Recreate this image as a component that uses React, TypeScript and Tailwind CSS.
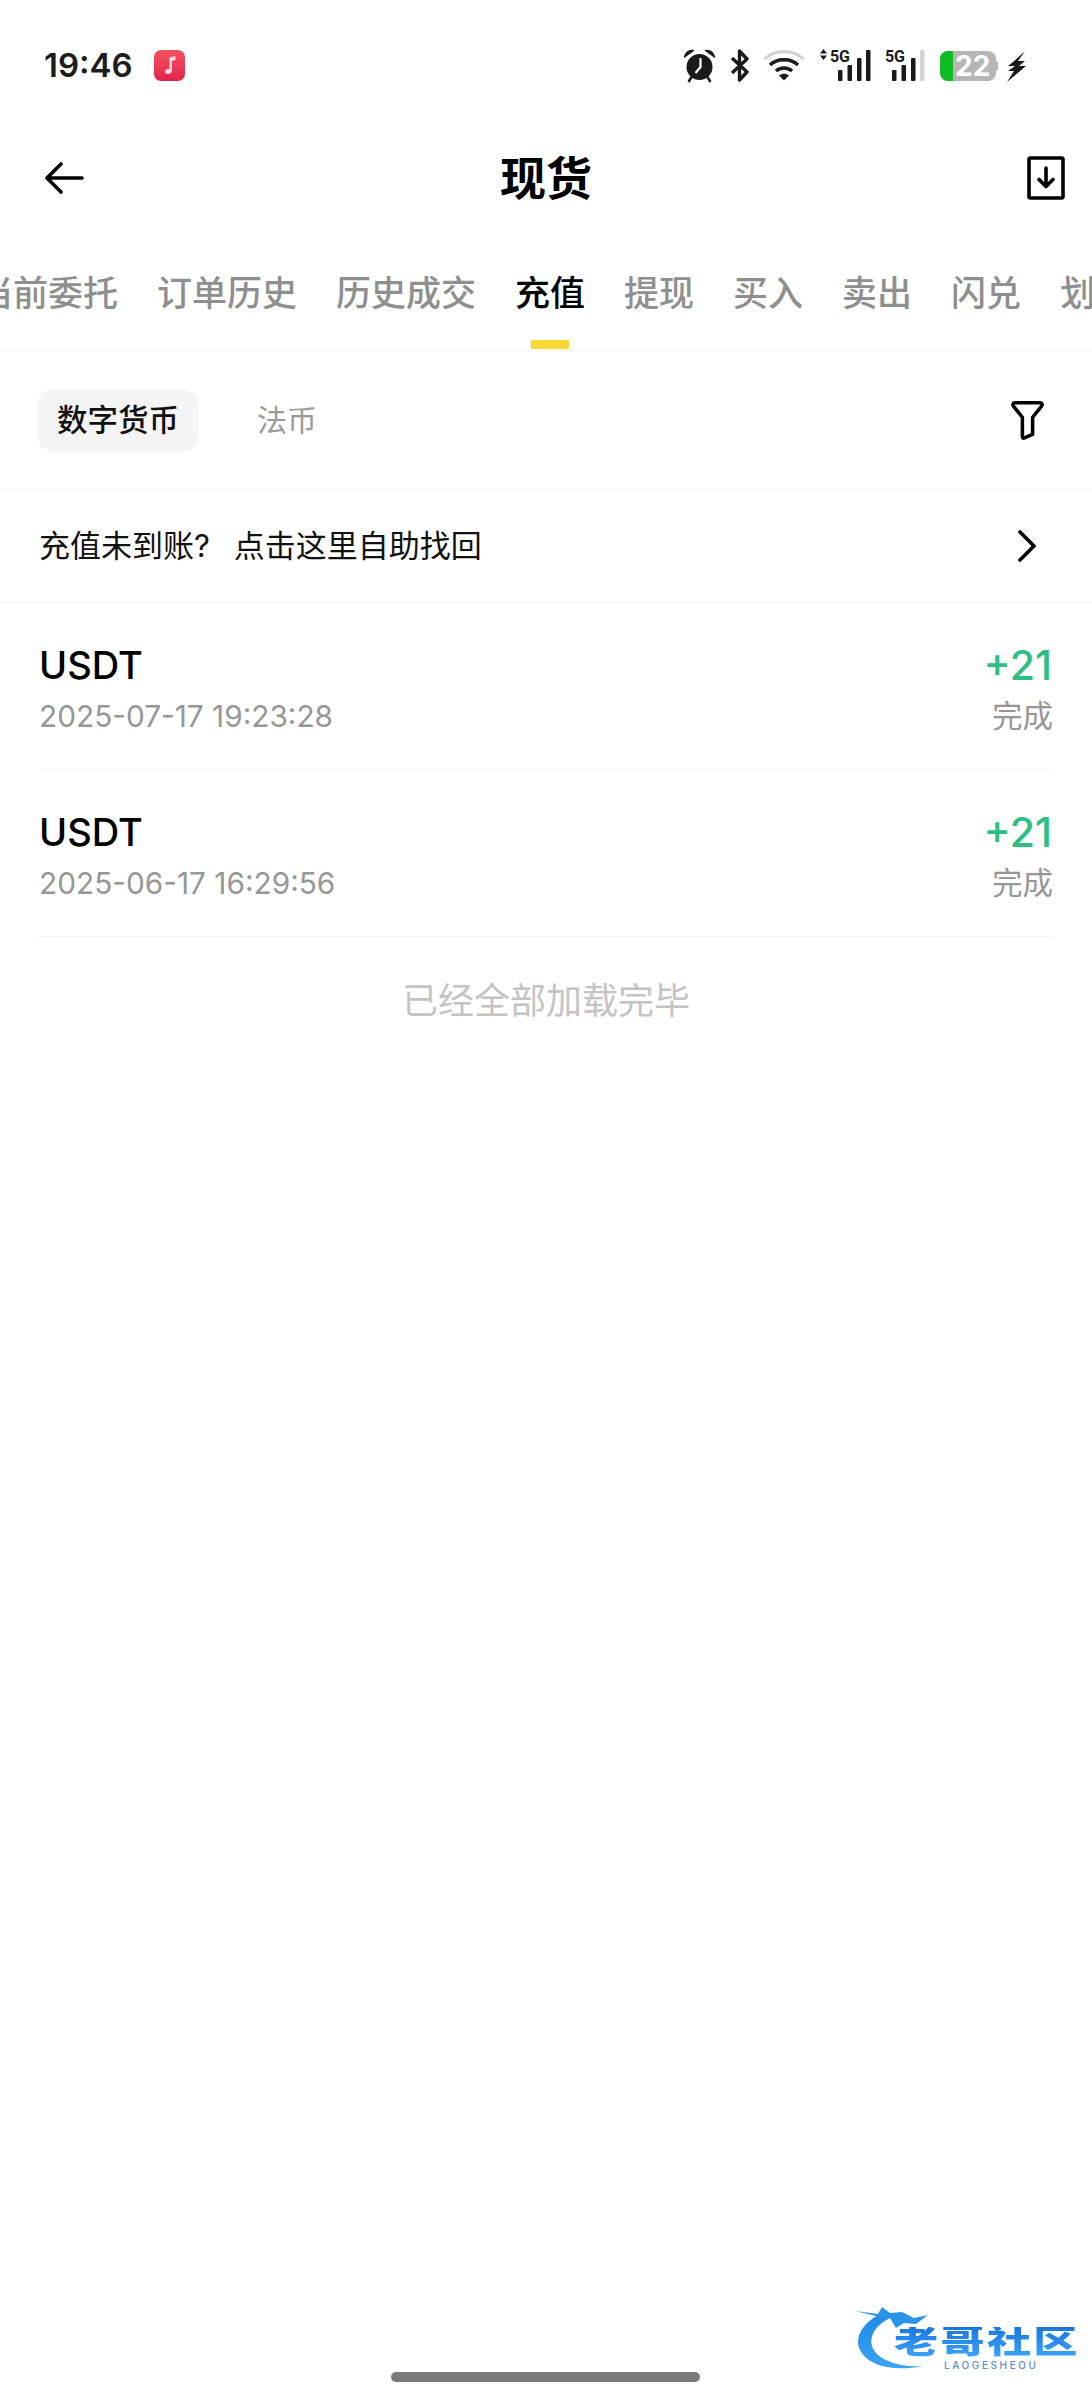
import React from 'react';

const tabs = ['当前委托', '订单历史', '历史成交', '充值', '提现', '买入', '卖出', '闪兑', '划转'];

const records = [
    { coin: 'USDT', time: '2025-07-17 19:23:28', amount: '+21', status: '完成' },
    { coin: 'USDT', time: '2025-06-17 16:29:56', amount: '+21', status: '完成' },
];

const Signal = ({ arrows, lastOff }: { arrows?: boolean; lastOff?: boolean }) => (
    <svg width={arrows ? 53 : 40} height="34" viewBox={arrows ? '0 0 53 34' : '0 0 40 34'} className="shrink-0">
        {arrows && <path d="M4.5 1 L8 5.5 H1 Z M4.5 12 L8 7.5 H1 Z" fill="#1a1a1a" />}
        <text x={arrows ? 11 : 0} y="14" fontSize="16" fontWeight="700" fill="#1a1a1a" fontFamily="Roboto, sans-serif" textLength="20">5G</text>
        <g transform={arrows ? 'translate(19 0)' : 'translate(7 0)'} fill="#1a1a1a">
            <rect x="0" y="22" width="4.5" height="11" rx="1" />
            <rect x="9.5" y="17" width="4.5" height="16" rx="1" />
            <rect x="19" y="10" width="4.5" height="23" rx="1" />
            <rect x="28" y="2" width="4.5" height="31" rx="1" fill={lastOff ? '#d4d4d4' : '#1a1a1a'} />
        </g>
    </svg>
);

const StatusBar = () => (
    <div className="h-[100px] pt-[49px] pl-[44px] pr-[65px] flex items-start justify-between">
        <div className="flex items-center h-[32px]">
            <span className="w-[110px] text-[33px] font-semibold text-[#1c1c1c] leading-none" style={{ fontFamily: 'Inter, sans-serif' }}>19:46</span>
            <div className="w-[31px] h-[31px] rounded-[7px] bg-gradient-to-b from-[#f4505f] to-[#e0224e] flex items-center justify-center">
                <svg width="20" height="22" viewBox="0 0 20 22">
                    <path d="M9.5 15V3.5L15.5 2V6L12 7V16.5C12 18.8 10 20 8 20C6 20 5 18.8 5 17.4C5 15.8 6.6 14.5 9.5 15Z" fill="#fbd5da" />
                </svg>
            </div>
        </div>
        <div className="flex items-start">
            {/* alarm */}
            <svg width="33" height="34" viewBox="0 0 32 34" className="shrink-0">
                <circle cx="16" cy="18" r="13" fill="#1a1a1a" />
                <path d="M1 8 C2 3 6 1 10 1.5 Z M31 8 C30 3 26 1 22 1.5 Z" fill="#1a1a1a" stroke="#1a1a1a" strokeWidth="1.5" strokeLinejoin="round" />
                <path d="M8 28 L5 33 M24 28 L27 33" stroke="#1a1a1a" strokeWidth="2.5" />
                <path d="M17 9 V18 L12 24" stroke="#fff" strokeWidth="2.2" fill="none" />
            </svg>
            {/* bluetooth */}
            <svg width="20" height="33" viewBox="0 0 20 33" className="ml-[14px] shrink-0">
                <path d="M2 9 L17 23 L9.5 31 V2 L17 10 L2 24" stroke="#1a1a1a" strokeWidth="3.4" fill="none" strokeLinejoin="round" />
            </svg>
            {/* wifi */}
            <svg width="42" height="32" viewBox="0 0 42 32" className="ml-[13px] shrink-0">
                <path d="M1.5 10 C12 0 30 0 40.5 10" stroke="#cfcfcf" strokeWidth="3" fill="none" />
                <path d="M7 16 C14 9 28 9 35 16" stroke="#1a1a1a" strokeWidth="3.4" fill="none" />
                <path d="M13 22 C17 18 25 18 29 22" stroke="#1a1a1a" strokeWidth="3.4" fill="none" />
                <path d="M16 26.5 C19 24 23 24 26 26.5 L21 31.5 Z" fill="#1a1a1a" />
            </svg>
            <div className="ml-[14px] mt-[-1px]"><Signal arrows /></div>
            <div className="ml-[13px] mt-[-1px]"><Signal lastOff /></div>
            {/* battery */}
            <div className="ml-[15px] mt-[2px] flex items-center">
                <div className="w-[56px] h-[30px] rounded-[8px] bg-[#b6b6b6] flex">
                    <div className="w-[13px] rounded-l-[8px] bg-[#0dbd21]" />
                    <span className="ml-[2px] text-[28px] leading-[30px] font-bold text-white" style={{ fontFamily: 'Inter, sans-serif' }}>22</span>
                </div>
                <div className="w-[2px] h-[10px] bg-[#b6b6b6] rounded-r-sm" />
            </div>
            {/* charging */}
            <svg width="20" height="32" viewBox="0 0 20 32" className="ml-[9px] mt-[2px] shrink-0">
                <path d="M18 0 L6 11 L1 15 H8 L1 20 H7 L0 31 L19 15 H12 L18 10 H11 Z" fill="#1a1a1a" />
            </svg>
        </div>
    </div>
);

export default function App() {
    return (
        <div className="relative w-[1092px] h-[2400px] bg-white flex flex-col overflow-hidden" style={{ fontFamily: 'Inter, "Noto Sans CJK SC", sans-serif' }}>
            <StatusBar />

            {/* Header */}
            <div className="h-[155px] pl-[44px] pr-[27px] flex items-center">
                <div className="flex-1">
                    <svg width="40" height="32" viewBox="0 0 40 32">
                        <path d="M38 16 H3 M17 2 L3 16 L17 30" stroke="#000" strokeWidth="3.6" fill="none" strokeLinecap="round" strokeLinejoin="round" />
                    </svg>
                </div>
                <h1 className="text-[46px] leading-none font-bold text-black pr-[17px]">现货</h1>
                <div className="flex-1 flex justify-end">
                    <svg width="38" height="44" viewBox="0 0 38 44">
                        <rect x="2" y="2" width="34" height="40" rx="1.5" stroke="#000" strokeWidth="3.6" fill="none" />
                        <path d="M19 12 V30 M12 23.5 L19 30.5 L26 23.5" stroke="#000" strokeWidth="3.6" fill="none" strokeLinecap="round" strokeLinejoin="round" />
                    </svg>
                </div>
            </div>

            {/* Tabs */}
            <div className="h-[96px] border-b border-[#f3f3f3] overflow-hidden">
                <div className="flex gap-[39px] ml-[-22px] pt-[18px] w-[1300px]">
                    {tabs.map(tab => {
                        const isActive = tab === '充值';
                        return (
                            <div key={tab} className="flex flex-col items-center shrink-0">
                                <span className={`text-[35px] leading-[40px] font-medium ${isActive ? 'text-black' : 'text-[#8f8f8f]'}`}>{tab}</span>
                                {isActive && <div className="w-[38px] h-[9px] mt-[27px] bg-[#fdd835]" />}
                            </div>
                        );
                    })}
                </div>
            </div>

            {/* Filter */}
            <div className="h-[139px] pl-[38px] pr-[47px] border-b border-[#f3f3f3] flex items-center">
                <div className="w-[160px] h-[61px] rounded-[14px] bg-[#f5f5f5] flex items-center justify-center text-[30.5px] font-medium text-[#111]">数字货币</div>
                <span className="ml-[59px] text-[30px] text-[#9a9a9a]">法币</span>
                <svg width="35" height="39" viewBox="0 0 36 42" className="ml-auto shrink-0">
                    <path d="M4.5 2 H31.5 C33.5 2 34.500 4 33 5.8 L23.500 17.5 V36 L14 40 C13 40 12.5 39 12.5 38 V17.5 L3 5.8 C1.5 4 2.5 2 4.5 2 Z" stroke="#000" strokeWidth="3.8" fill="none" strokeLinejoin="round" />
                </svg>
            </div>

            {/* Help */}
            <div className="h-[113px] pl-[39px] pr-[55px] border-b border-[#f3f3f3] flex items-center justify-between">
                <span className="text-[31px] text-[#111] whitespace-nowrap">
                    充值未到账?<span className="ml-[24px]">点击这里自助找回</span>
                </span>
                <svg width="20" height="32" viewBox="0 0 20 32" className="shrink-0">
                    <path d="M3 2 L17 16 L3 30" stroke="#000" strokeWidth="3.6" fill="none" strokeLinecap="round" strokeLinejoin="round" />
                </svg>
            </div>

            {/* Records */}
            <div className="px-[39px]">
                {records.map(r => (
                    <div key={r.time} className="h-[167px] border-b border-[#f3f3f3] pt-[40px]">
                        <div className="flex justify-between items-center h-[44px] pr-[1px]">
                            <span className="text-[38px] font-medium text-black leading-none">{r.coin}</span>
                            <span className="text-[41px] font-medium text-[#2ebd85] leading-none">{r.amount}</span>
                        </div>
                        <div className="flex justify-between items-center h-[40px] mt-[10px]">
                            <span className="text-[29.8px] text-[#979797] leading-none">{r.time}</span>
                            <span className="text-[30.5px] text-[#979797] leading-none mb-[1px]">{r.status}</span>
                        </div>
                    </div>
                ))}
            </div>

            <div className="mt-[39px] text-center text-[36px] leading-[50px] text-[#c4c4c4]">已经全部加载完毕</div>

            {/* Home indicator */}
            <div className="mt-auto mb-[18px] ml-[391px] w-[309px] h-[10px] rounded-full bg-[#7b7b7b]" />

            {/* Watermark */}
            <div className="absolute left-[852px] top-[2300px] w-[230px] h-[80px]">
                <svg width="125" height="76" viewBox="0 0 125 76" className="absolute left-0 top-0">
                    <defs>
                        <linearGradient id="wm" x1="0" y1="0" x2="0" y2="1">
                            <stop offset="0" stopColor="#1e88e5" />
                            <stop offset="1" stopColor="#3aa5f5" />
                        </linearGradient>
                    </defs>
                    <path d="M32 12 C10 22 2 38 8 50 C16 66 40 72 72 66 C48 68 24 60 20 46 C17 34 26 24 38 18 Z" fill="url(#wm)" />
                    <path d="M3 11 L26 14 L30 7 L38 13 L50 12 L62 18 L76 15 L64 24 L52 23 L44 28 L38 18 L28 17 Z" fill="#2b93ea" />
                </svg>
                <div className="absolute left-[42px] top-[27px] w-[133px] flex justify-between text-[32px] leading-[30px] font-black text-transparent bg-clip-text bg-gradient-to-b from-[#1976e0] to-[#3ca4f5] whitespace-nowrap scale-x-[1.38] origin-left">
                    <span>老</span><span>哥</span><span>社</span><span>区</span>
                </div>
                <div className="absolute left-[92px] top-[60px] w-[114px] text-[10px] leading-[10px] font-medium text-[#5a8fc8] tracking-[2.6px]">LAOGESHEOU</div>
            </div>
        </div>
    );
}
